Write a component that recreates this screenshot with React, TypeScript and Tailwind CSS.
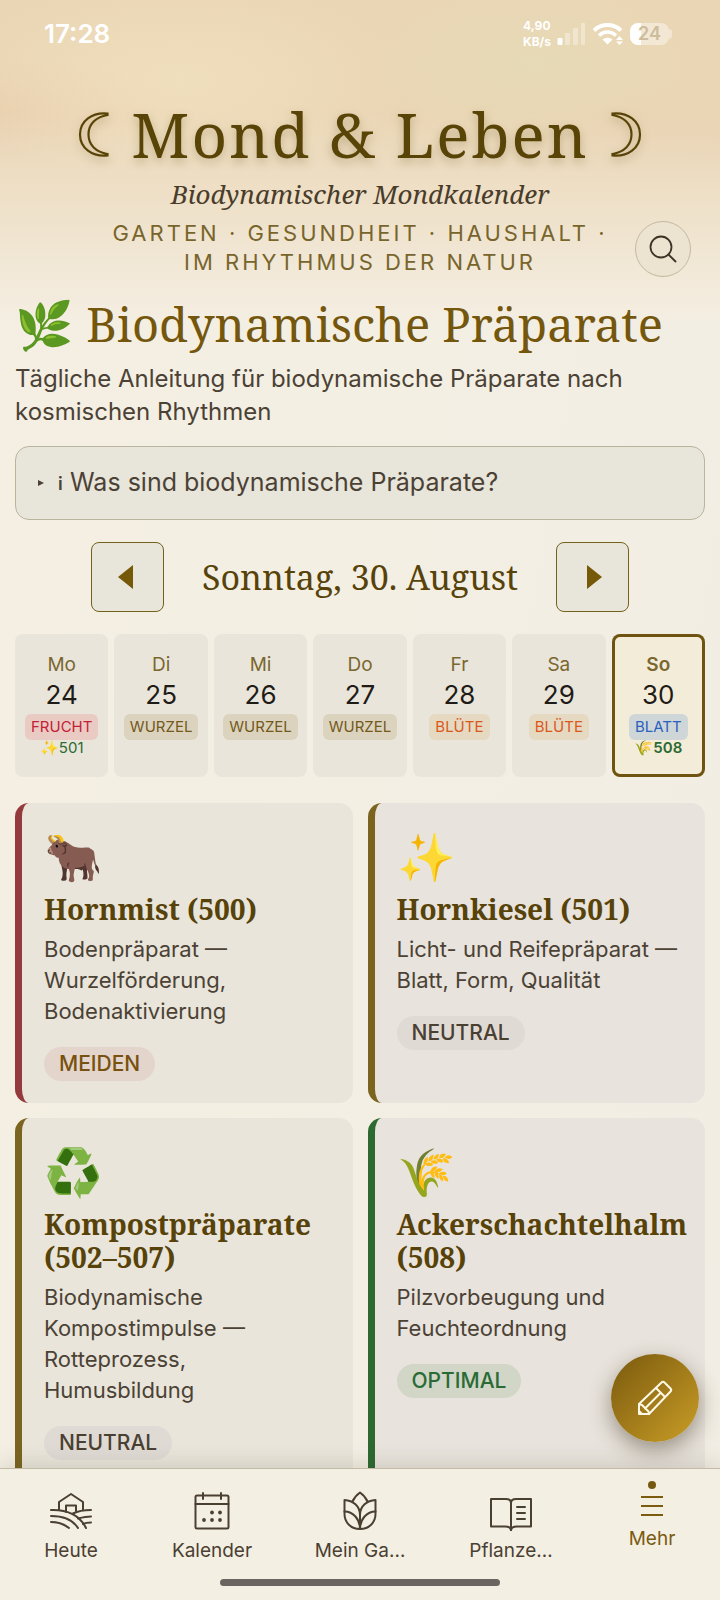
import type { ReactNode } from "react";

type Day = { name: string; date: number; kind: string; tone: string; prep?: string; active?: boolean };

const FRUIT = "bg-[#e9cbc4] text-[#c32135]";
const ROOT = "bg-[#dcd3be] text-[#73591b]";
const BLOSSOM = "bg-[#e5d9c2] text-[#da581c]";
const LEAF = "bg-[#cfd6d8] text-[#2a62bf]";

const days: Day[] = [
  { name: "Mo", date: 24, kind: "FRUCHT", tone: FRUIT, prep: "✨501" },
  { name: "Di", date: 25, kind: "WURZEL", tone: ROOT },
  { name: "Mi", date: 26, kind: "WURZEL", tone: ROOT },
  { name: "Do", date: 27, kind: "WURZEL", tone: ROOT },
  { name: "Fr", date: 28, kind: "BLÜTE", tone: BLOSSOM },
  { name: "Sa", date: 29, kind: "BLÜTE", tone: BLOSSOM },
  { name: "So", date: 30, kind: "BLATT", tone: LEAF, prep: "🌾508", active: true },
];

type Prep = { icon: string; title: string; text: string; status: string; badge: string; border: string };

const preps: Prep[] = [
  {
    icon: "🐂",
    title: "Hornmist (500)",
    text: "Bodenpräparat — Wurzelförderung, Bodenaktivierung",
    status: "MEIDEN",
    badge: "bg-[#e3d5cc] text-[#78510f]",
    border: "border-[#943a3c]",
  },
  {
    icon: "✨",
    title: "Hornkiesel (501)",
    text: "Licht- und Reifepräparat — Blatt, Form, Qualität",
    status: "NEUTRAL",
    badge: "bg-[#dfdad4] text-[#4a4032]",
    border: "border-[#7a6420]",
  },
  {
    icon: "♻️",
    title: "Kompostpräparate (502–507)",
    text: "Biodynamische Kompostimpulse — Rotteprozess, Humusbildung",
    status: "NEUTRAL",
    badge: "bg-[#dfdad4] text-[#4a4032]",
    border: "border-[#7a6420]",
  },
  {
    icon: "🌾",
    title: "Ackerschachtelhalm (508)",
    text: "Pilzvorbeugung und Feuchteordnung",
    status: "OPTIMAL",
    badge: "bg-[#d1d6c7] text-[#2a6b35]",
    border: "border-[#2c6a31]",
  },
];

function StatusBar() {
  return (
    <div className="flex h-16 items-center justify-between pt-1 pr-12 pl-11 text-white">
      <span className="text-[26px] font-semibold leading-8">17:28</span>
      <div className="flex items-center gap-1.5">
        <span className="text-[12px] font-bold leading-4">
          4,90
          <br />
          KB/s
        </span>
        <svg width="29" height="22" viewBox="0 0 29 22" fill="#fff" aria-hidden="true">
          <rect x="0.500" y="15" width="5" height="7" rx="1" />
          <g opacity="0.35">
            <rect x="8" y="10" width="5" height="12" rx="1" />
            <rect x="16" y="5" width="5" height="17" rx="1" />
            <rect x="24" y="0" width="4" height="22" rx="1" />
          </g>
        </svg>
        <svg width="32" height="22" viewBox="0 0 32 22" fill="none" stroke="#fff" aria-hidden="true">
          <path d="M2 7.500C9.500 0.300 21.500 0.300 29 7.500" strokeWidth="4" />
          <path d="M7 12.500C12 7.800 19 7.800 24 12.500" strokeWidth="3.600" />
          <path d="M10.500 16.500C13.500 14 17.500 14 20.500 16.500L15.500 21.500Z" fill="#fff" stroke="none" />
          <path d="M24 17L27.500 13L31 17ZM24 18.500L27.500 22L31 18.500Z" fill="#fff" stroke="none" />
        </svg>
        <div className="flex items-center">
          <span className="flex h-[22px] w-[39px] items-center justify-center rounded-lg bg-[linear-gradient(to_right,#fff_27%,rgba(255,255,255,0.42)_27%)] text-[18px] font-semibold leading-5 text-[#cdbd9c]">
            24
          </span>
          <span className="h-2.5 w-[3px] rounded-r-full bg-white/40" />
        </div>
      </div>
    </div>
  );
}

function Moon({ flip = false }: { flip?: boolean }) {
  return (
    <svg
      width="31"
      height="45"
      viewBox="0 0 31 45"
      fill="none"
      stroke="#594408"
      strokeWidth="2.200"
      className={flip ? "-scale-x-100" : ""}
      aria-hidden="true"
    >
      <path d="M29.500 1.500C14 0 2 9 2 22.500C2 36 14 45 29.500 43.500V42C18 40 10.500 33 10.500 22.500C10.500 12 18 5 29.500 3Z" />
    </svg>
  );
}

function DayCell({ day }: { day: Day }) {
  return (
    <button
      type="button"
      className={`flex h-[143px] min-w-0 flex-col items-center rounded-lg pt-5 ${
        day.active ? "bg-[#f3ecd9] font-semibold shadow-[inset_0_0_0_3px_#6f5311]" : "bg-[#e9e5da]"
      }`}
    >
      <span className={`text-[19px] leading-[22px] text-[#7a6730] ${day.active ? "font-semibold" : ""}`}>{day.name}</span>
      <span className="text-[26px] font-normal leading-[38px] text-[#1f1b16]">{day.date}</span>
      <span className={`rounded-md px-[6px] text-[15px] font-normal leading-[26px] ${day.tone}`}>{day.kind}</span>
      {day.prep && <span className="text-[15px] leading-4 text-[#2c6a31]">{day.prep}</span>}
    </button>
  );
}

function PrepCard({ prep }: { prep: Prep }) {
  return (
    <article
      className={`min-h-[300px] rounded-[14px] border-l-[7px] bg-[#e9e5da] px-[22px] pt-7 pb-[22px] even:bg-[#e8e3dc] ${prep.border}`}
    >
      <div className="h-[52px] text-[47px] leading-[52px]">{prep.icon}</div>
      <h3 className="-mr-2 mt-2.5 font-['Noto_Serif',serif] text-[28px] font-bold leading-[33px] text-[#574209]">{prep.title}</h3>
      <p className="mt-2 text-[22px] leading-[31px] text-[#4b4235]">{prep.text}</p>
      <span className={`mt-5 inline-block rounded-full px-[15px] text-[21px] font-medium leading-[34px] ${prep.badge}`}>
        {prep.status}
      </span>
    </article>
  );
}

function NavIcon({ children, w = 44, h = 40 }: { children: ReactNode; w?: number; h?: number }) {
  return (
    <svg
      width={w}
      height={h}
      viewBox={`0 0 ${w} ${h}`}
      fill="none"
      stroke="currentColor"
      strokeWidth="2"
      strokeLinecap="round"
      strokeLinejoin="round"
      aria-hidden="true"
    >
      {children}
    </svg>
  );
}

const navItems = [
  {
    label: "Heute",
    icon: (
      <NavIcon>
        <path d="M10 19V11L22 3L34 11V19" />
        <path d="M17 21V14.500H27V20" />
        <path d="M2 19C18 18.500 30 23 37 37" />
        <path d="M2 25C14 25 24 29 29 37" />
        <path d="M2 31C9 31 15 33 20 37" />
        <path d="M42 19C35 19 29 20 24 22.500" />
        <path d="M42 25.500C37 25.500 33 26.500 29 27.500" />
        <path d="M42 31.500C39 31.500 36 32 34 33" />
      </NavIcon>
    ),
  },
  {
    label: "Kalender",
    icon: (
      <NavIcon>
        <rect x="5.500" y="4.500" width="33" height="33" rx="1.500" />
        <path d="M5.500 13H38.500M13 2V8M31 2V8" />
        <g fill="currentColor" stroke="none">
          <circle cx="22" cy="21.500" r="1.900" />
          <circle cx="30" cy="21.500" r="1.900" />
          <circle cx="14" cy="29" r="1.900" />
          <circle cx="22" cy="29" r="1.900" />
          <circle cx="30" cy="29" r="1.900" />
        </g>
      </NavIcon>
    ),
  },
  {
    label: "Mein Ga…",
    icon: (
      <NavIcon>
        <path d="M22 38C13 38 6.500 31.500 6.500 23V9C15 9.500 22 15 22 24C22 15 29 9.500 37.500 9V23C37.500 31.500 31 38 22 38Z" />
        <path d="M22 38C22 28 15 20.500 6.500 20.500M22 38C22 28 29 20.500 37.500 20.500M22 24V38" />
        <path d="M14.500 10.500C16 7 18.500 4 22 1.500C25.500 4 28 7 29.500 10.500" />
      </NavIcon>
    ),
  },
  {
    label: "Pflanze…",
    icon: (
      <NavIcon>
        <path d="M22 12C22 9.500 20 8 17 8H2V35.500H16C20 35.500 22 37 22 39.500C22 37 24 35.500 28 35.500H42V8H27C24 8 22 9.500 22 12ZM22 12V39" />
        <path d="M28 16H36M28 22H36M28 28H36" />
      </NavIcon>
    ),
  },
];

function BottomNav() {
  return (
    <nav className="relative shrink-0 border-t border-[#c4bba6] bg-[#f4efe3] shadow-[0_-4px_20px_rgba(60,50,30,0.14)]">
      <div className="grid h-[110px] grid-cols-[142fr_140fr_156fr_146fr_136fr] text-[19px] leading-6 text-[#4a4032]">
        {navItems.map((item) => (
          <a key={item.label} href="#" className="flex flex-col items-center gap-2 pt-[22px]">
            {item.icon}
            <span>{item.label}</span>
          </a>
        ))}
        <a href="#" aria-current="page" className="flex flex-col items-center text-[#7a5b10]">
          <span className="mt-3 size-2 rounded-full bg-[#755810]" />
          <svg width="22" height="24" viewBox="0 0 22 24" stroke="#7a5b10" strokeWidth="2" className="mt-1.5" aria-hidden="true">
            <path d="M0 2H22M0 11H22M0 20H22" />
          </svg>
          <span className="mt-2">Mehr</span>
        </a>
      </div>
      <div className="mx-auto mb-3.5 h-[7px] w-[39%] rounded-full bg-[#6a665f]" />
    </nav>
  );
}

export default function App() {
  return (
    <div className="flex h-screen flex-col overflow-hidden bg-[linear-gradient(100deg,#f5eee3,#f3efe3_45%,#f2ede4)] font-['Inter','Noto_Sans',sans-serif]">
      <div className="min-h-0 flex-1 overflow-hidden bg-[linear-gradient(to_bottom,transparent_35%,#f4eee2),radial-gradient(ellipse_at_25%_25%,rgba(242,226,192,0.7),transparent_30%),radial-gradient(ellipse_at_74%_20%,rgba(230,219,182,0.8),transparent_22%),radial-gradient(ellipse_at_0%_35%,rgba(232,204,172,0.7),transparent_18%),radial-gradient(ellipse_at_100%_45%,rgba(232,208,175,0.6),transparent_25%),linear-gradient(to_bottom,#ead6b5,#ead6b5)] bg-[length:100%_320px] bg-no-repeat">
        <StatusBar />
        <header className="relative px-4 pt-8 text-center">
          <h1 className="flex items-center justify-center gap-[22px] font-['Noto_Serif',serif] text-[62px] leading-[76px] tracking-[2px] text-[#594408] drop-shadow-[0_4px_5px_rgba(90,68,8,0.3)]">
            <Moon />
            Mond &amp; Leben
            <Moon flip />
          </h1>
          <p className="mt-1 font-['Noto_Serif',serif] text-[26px] italic leading-9 text-[#4a3c2a]">Biodynamischer Mondkalender</p>
          <p className="mx-auto mt-[7px] max-w-[520px] text-[22px] leading-[29px] tracking-[3px] text-[#78652c]">
            GARTEN · GESUNDHEIT · HAUSHALT · IM RHYTHMUS DER NATUR
          </p>
          <button
            type="button"
            aria-label="Suche"
            className="absolute right-[29px] bottom-0 flex size-14 items-center justify-center rounded-full border border-[#c4b99f] bg-[#ece3d1]"
          >
            <svg width="28" height="28" viewBox="0 0 28 28" fill="none" stroke="#3d3326" strokeWidth="1.800" strokeLinecap="round" aria-hidden="true">
              <circle cx="12" cy="12" r="10.500" />
              <path d="M19.500 19.500L26.500 26.500" />
            </svg>
          </button>
        </header>

        <main className="px-[15px]">
          <h2 className="whitespace-nowrap pt-[15px] font-['Noto_Serif',serif] text-[47px] leading-[64px] text-[#74570d]">🌿 Biodynamische Präparate</h2>
          <p className="mt-1.5 text-[24px] leading-[33px] text-[#4b4235]">
            Tägliche Anleitung für biodynamische Präparate nach kosmischen Rhythmen
          </p>

          <details className="mt-[18px] rounded-[14px] border border-[#b9b49c] bg-[#e8e5da]">
            <summary className="flex h-[72px] cursor-pointer list-none items-center pl-[22px] text-[25px] text-[#4b4235]">
              <svg width="6" height="6" viewBox="0 0 6 6" fill="currentColor" aria-hidden="true">
                <path d="M0 0L6 3L0 6Z" />
              </svg>
              <span className="ml-3.5 w-3 text-[18px] font-semibold">i</span>
              <span>Was sind biodynamische Präparate?</span>
            </summary>
          </details>

          <div className="mt-[22px] flex items-center justify-center gap-[38px]">
            <button type="button" aria-label="Vorheriger Tag" className="flex h-[70px] w-[73px] items-center justify-center rounded-lg border border-[#74611c] bg-[#e8e5da]">
              <svg width="18" height="24" viewBox="0 0 18 24" fill="#755808" aria-hidden="true">
                <path d="M15 0V24L0 12Z" />
              </svg>
            </button>
            <span className="font-['Noto_Serif',serif] text-[34px] leading-[44px] text-[#574209]">Sonntag, 30. August</span>
            <button type="button" aria-label="Nächster Tag" className="flex h-[70px] w-[73px] items-center justify-center rounded-lg border border-[#74611c] bg-[#e8e5da]">
              <svg width="18" height="24" viewBox="0 0 18 24" fill="#755808" aria-hidden="true">
                <path d="M3 0V24L18 12Z" />
              </svg>
            </button>
          </div>

          <div className="mt-[22px] grid grid-cols-7 gap-[6px]">
            {days.map((day) => (
              <DayCell key={day.name} day={day} />
            ))}
          </div>

          <div className="mt-[26px] grid grid-cols-2 gap-[15px]">
            {preps.map((prep) => (
              <PrepCard key={prep.title} prep={prep} />
            ))}
          </div>
        </main>
      </div>

      <button
        type="button"
        aria-label="Notiz schreiben"
        className="fixed right-[21px] bottom-[158px] z-10 flex size-[88px] items-center justify-center rounded-full bg-[linear-gradient(135deg,#7a590d,#c99d27)] shadow-[0_8px_22px_rgba(50,40,20,0.45)]"
      >
        <svg width="36" height="36" viewBox="0 0 36 36" fill="none" stroke="#fff8e6" strokeWidth="2" strokeLinejoin="round" strokeLinecap="round" aria-hidden="true">
          <path d="M2 34V24L24.500 2.500C25.500 1.500 26.500 1.500 27.500 2.500L33.500 8.500C34.500 9.500 34.500 10.500 33.500 11.500L12 34Z" />
          <path d="M19 8L28 17M2 24L5 25L11.500 31.500L12 34M8 28.500L22.500 14M2 31L5 34" />
        </svg>
      </button>

      <BottomNav />
    </div>
  );
}
